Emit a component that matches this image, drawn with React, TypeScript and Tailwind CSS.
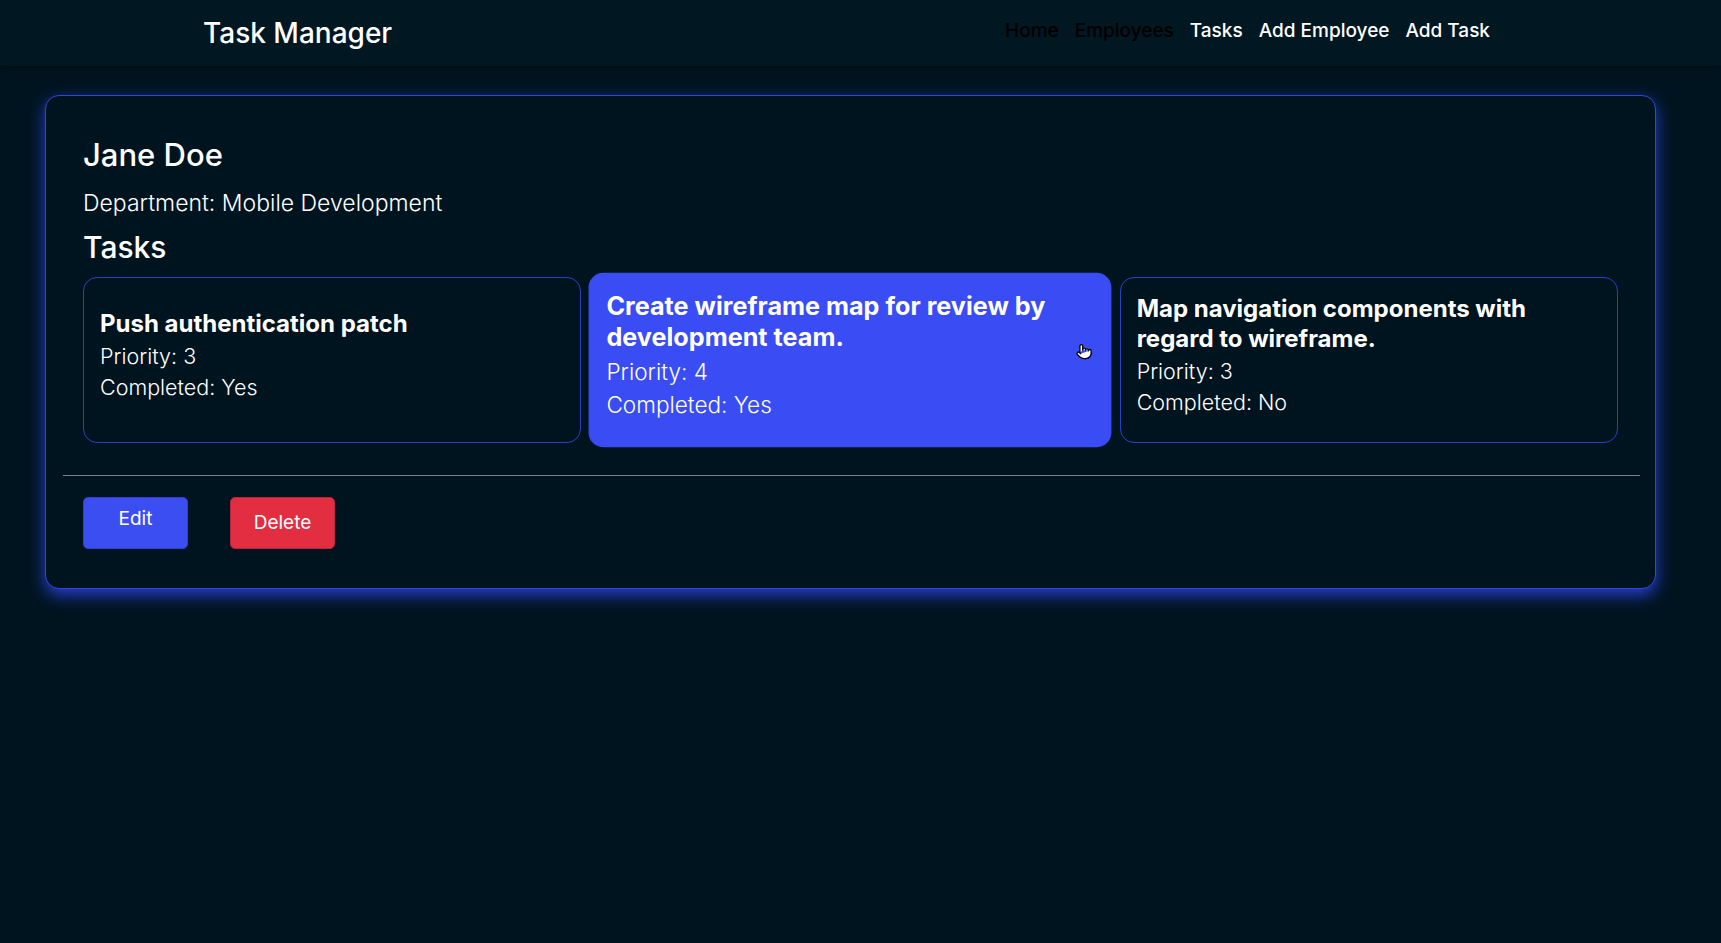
import { Pointer } from "lucide-react";

const tasks = [
  { title: "Push authentication patch", priority: 3, completed: "Yes" },
  {
    title: "Create wireframe map for review by development team.",
    priority: 4,
    completed: "Yes",
    hovered: true,
  },
  {
    title: "Map navigation components with regard to wireframe.",
    priority: 3,
    completed: "No",
  },
];

const Navbar = () => {
  return (
    <nav className="flex h-[66px] items-center bg-[#011722] shadow-[0_2px_4px_rgba(0,0,0,0.45)]">
      <h1 className="pl-[203px] text-[28px] font-medium text-white">Task Manager</h1>
      <div className="ml-auto flex gap-4 pb-1 pr-[231px] text-[19px] font-medium">
        <a className="text-black">Home</a>
        <a className="text-black">Employees</a>
        <a className="text-white">Tasks</a>
        <a className="text-white">Add Employee</a>
        <a className="text-white">Add Task</a>
      </div>
    </nav>
  );
};

const App = () => {
  return (
    <div
      className="min-h-screen bg-[#001420] text-white"
      style={{ fontFamily: "Inter, 'Noto Sans', sans-serif" }}
    >
      <Navbar />

      {/* Employee card */}
      <section className="ml-[45px] mt-[29px] w-[1611px] rounded-[14px] border border-[#2f47d8] bg-[#001420] px-[37px] pb-[39px] pt-[39px] shadow-[0_6px_16px_rgba(45,70,240,0.85)]">
        <h2 className="text-[31px] font-medium leading-[40px]">Jane Doe</h2>
        <p className="mt-[13px] text-[23px] font-light leading-[30px]">
          Department: Mobile Development
        </p>
        <h3 className="mt-[11px] text-[30px] font-medium leading-[36px]">Tasks</h3>

        {/* Task grid */}
        <div className="mt-[12px] grid grid-cols-3 gap-5">
          {tasks.map((task, i) => (
            <div
              key={i}
              className={
                task.hovered
                  ? "relative flex scale-105 flex-col justify-center rounded-[14px] border border-[#3a4cf4] bg-[#3a4cf4] p-4"
                  : "relative flex flex-col justify-center rounded-[14px] border border-[#2740c8] p-4"
              }
            >
              <div className="pb-2">
                <h4 className="text-[24px] font-bold leading-[30px]">{task.title}</h4>
                <p className="mt-[2px] text-[21.5px] font-light leading-[31px]">
                  Priority: {task.priority}
                </p>
                <p className="text-[21.5px] font-light leading-[31px]">
                  Completed: {task.completed}
                </p>
              </div>
              {task.hovered && (
                <Pointer
                  className="absolute left-[463px] top-[66px] h-[16px] w-[16px] fill-white text-black"
                  strokeWidth={1.8}
                />
              )}
            </div>
          ))}
        </div>

        <hr className="ml-[-20px] mr-[-22px] mt-[32px] border-t border-[#7b858c]" />

        {/* Actions */}
        <div className="mt-[21px] flex gap-[42px]">
          <button className="h-[52px] w-[105px] rounded-[5px] border border-[#2f41c9] bg-[#3a4ef2] pb-[7px] text-[19px] text-white">
            Edit
          </button>
          <button className="h-[52px] w-[105px] rounded-[5px] border border-[#b82637] bg-[#e32d41] text-[19px] text-white">
            Delete
          </button>
        </div>
      </section>
    </div>
  );
};

export default App;
